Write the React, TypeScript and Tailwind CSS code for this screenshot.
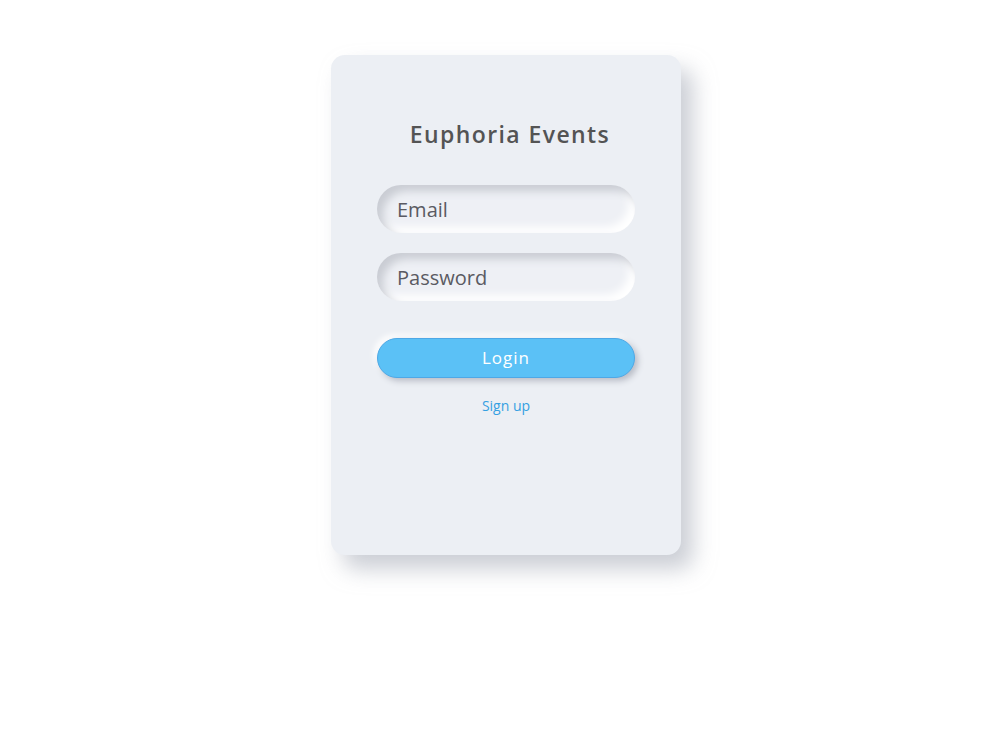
import React from 'react';

const font = { fontFamily: '"Open Sans", "Noto Sans", sans-serif' };

const field =
  'w-[258px] h-[48px] rounded-full bg-[#eef0f5] px-5 text-[20px] text-[#555] placeholder:text-[#5a5a62] outline-none shadow-[inset_6px_6px_8px_#c9ccd3,inset_-6px_-6px_8px_#ffffff]';

export default function App() {
  return (
    <div className="min-h-[750px] w-full bg-white flex justify-center" style={font}>
      <div className="mt-[55px] ml-[12px] w-[350px] h-[500px] rounded-[14px] bg-[#eceff4] shadow-[12px_14px_22px_rgba(160,165,178,0.55)] flex flex-col items-center pt-[68px] px-[46px]">
        <h1 className="text-[23px] leading-none font-semibold tracking-[1.4px] text-[#545454] pl-2">
          Euphoria Events
        </h1>

        <input placeholder="Email" className={`mt-[39px] ${field}`} />
        <input type="password" placeholder="Password" className={`mt-[20px] ${field}`} />

        <button className="mt-[37px] w-[258px] h-[40px] rounded-full bg-[#5bc1f6] border border-[#4ea8e6] text-white text-[17px] font-medium tracking-[1px] shadow-[3px_3px_6px_#b8bcc6,-3px_-3px_6px_#ffffff]">
          Login
        </button>

        <a href="#" className="mt-[17px] text-[14px] text-[#35a0e2]">
          Sign up
        </a>
      </div>
    </div>
  );
}
